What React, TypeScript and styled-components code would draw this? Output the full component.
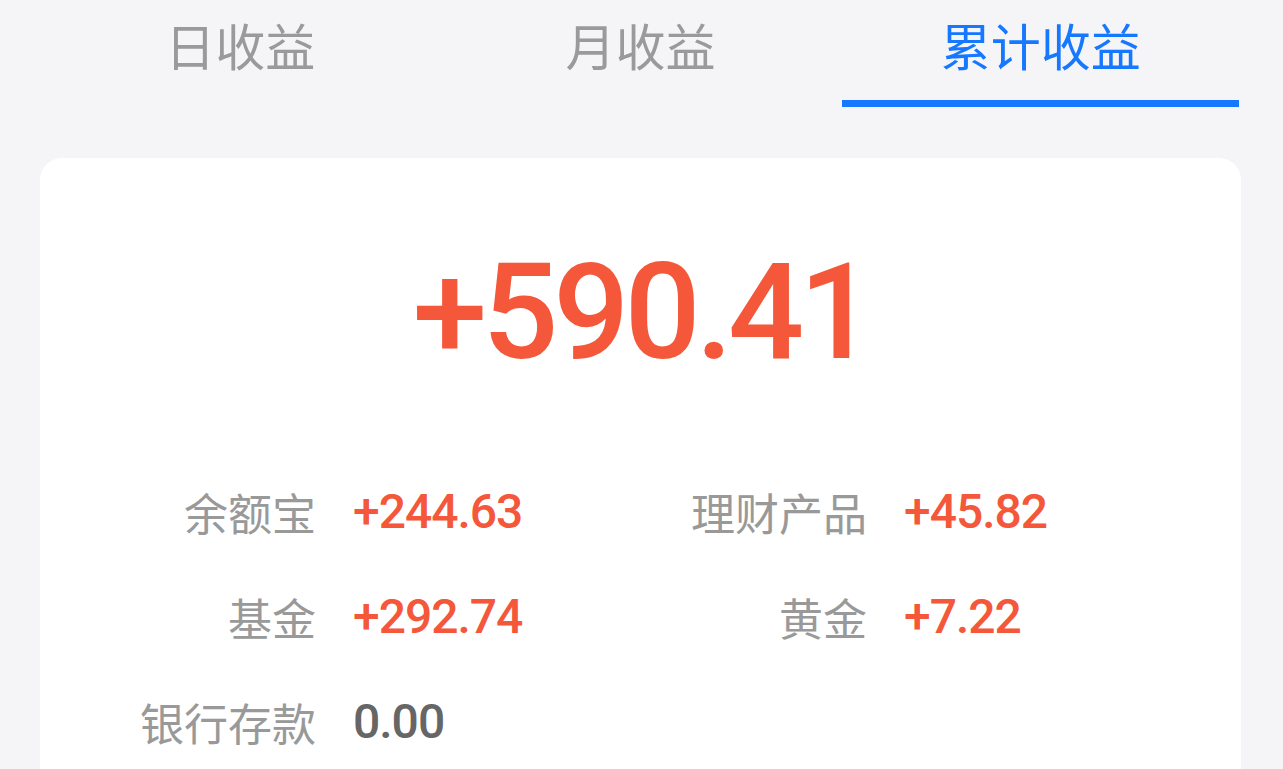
import React from "react";
import styled, { createGlobalStyle } from "styled-components";

const GlobalStyle = createGlobalStyle`
  html, body {
    margin: 0;
    padding: 0;
    background: #f5f5f7;
  }
  body {
    font-family: "Noto Sans CJK SC", "Noto Sans", sans-serif;
    overflow: hidden;
  }
`;

const Page = styled.div`
  width: 1283px;
  min-height: 769px;
  background: #f5f5f7;
`;

const TabBar = styled.div`
  display: flex;
  padding: 0 42px 0 40px;
`;

const Tab = styled.div`
  flex: 1;
  height: 107px;
  display: flex;
  flex-direction: column;
  align-items: center;
  justify-content: space-between;
`;

const TabLabel = styled.span<{ $active?: boolean }>`
  margin-top: 13px;
  font-family: "Noto Sans CJK SC", sans-serif;
  font-size: 50px;
  line-height: 62px;
  color: ${(p) => (p.$active ? "#1677ff" : "#9a9a9a")};
`;

const Underline = styled.div<{ $active?: boolean }>`
  width: 397px;
  height: 7px;
  background: ${(p) => (p.$active ? "#1677ff" : "transparent")};
`;

const Card = styled.div`
  margin: 51px 42px 0 40px;
  background: #ffffff;
  border-radius: 22px;
  height: 700px;
  display: flex;
  flex-direction: column;
  align-items: center;
`;

const Total = styled.div`
  margin-top: 80px;
  padding-left: 2px;
  font-family: Roboto, "Liberation Sans", sans-serif;
  font-weight: 500;
  font-size: 134px;
  line-height: 150px;
  letter-spacing: -5px;
  color: #f4573a;
`;

const Grid = styled.div`
  align-self: stretch;
  margin-top: 94px;
  display: grid;
  grid-template-columns: 276px 200px 277px 1fr;
  column-gap: 37px;
  row-gap: 45px;
  align-items: center;
`;

const Label = styled.div`
  height: 60px;
  text-align: right;
  font-family: "Noto Sans CJK SC", sans-serif;
  font-size: 44px;
  line-height: 60px;
  color: #999999;
  white-space: nowrap;
`;

const Value = styled.div<{ $zero?: boolean }>`
  height: 60px;
  font-family: Roboto, "Liberation Sans", sans-serif;
  font-weight: 500;
  font-size: 48px;
  line-height: 60px;
  letter-spacing: -1px;
  color: ${(p) => (p.$zero ? "#666666" : "#f4573a")};
  white-space: nowrap;
`;

const tabs = ["日收益", "月收益", "累计收益"];

const items: { label: string; value: string; zero?: boolean }[] = [
  { label: "余额宝", value: "+244.63" },
  { label: "理财产品", value: "+45.82" },
  { label: "基金", value: "+292.74" },
  { label: "黄金", value: "+7.22" },
  { label: "银行存款", value: "0.00", zero: true },
];

export default function App() {
  return (
    <Page>
      <GlobalStyle />
      <TabBar>
        {tabs.map((t, i) => (
          <Tab key={t}>
            <TabLabel $active={i === 2}>{t}</TabLabel>
            <Underline $active={i === 2} />
          </Tab>
        ))}
      </TabBar>
      <Card>
        <Total>+590.41</Total>
        <Grid>
          {items.map((it) => (
            <React.Fragment key={it.label}>
              <Label>{it.label}</Label>
              <Value $zero={it.zero}>{it.value}</Value>
            </React.Fragment>
          ))}
        </Grid>
      </Card>
    </Page>
  );
}
